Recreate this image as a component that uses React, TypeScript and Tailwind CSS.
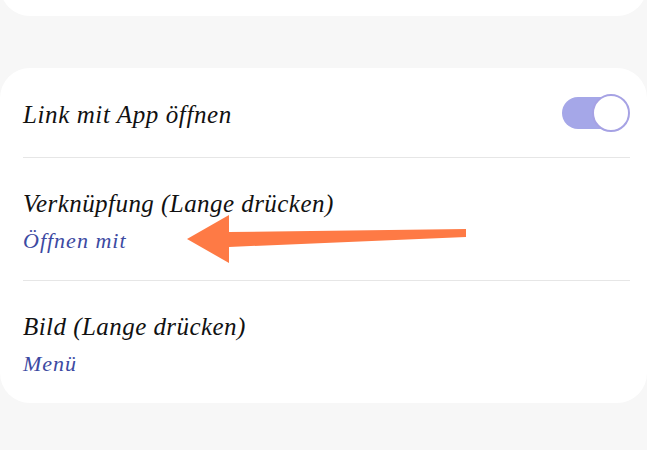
import React from "react";

const serif = { fontFamily: '"Liberation Serif", "DejaVu Serif", serif' };

function Toggle({ on }: { on: boolean }) {
  return (
    <div className="relative w-[68px] h-[38px] flex items-center">
      <div className={`h-[32px] w-[60px] rounded-full ${on ? "bg-[#a5a7e8]" : "bg-gray-300"}`} />
      <div className="absolute right-0 top-0 h-[38px] w-[38px] rounded-full bg-white border-2 border-[#a6a2e4]" />
    </div>
  );
}

function Row({ title, sub }: { title: string; sub: string }) {
  return (
    <div className="pt-[30px] pb-[25px]">
      <div className="text-[25px] leading-[32px] italic tracking-[0.45px] text-[#111]">{title}</div>
      <div className="mt-[7px] text-[22px] leading-[28px] italic tracking-[1px] text-[#3c4aa2]">{sub}</div>
    </div>
  );
}

export default function App() {
  return (
    <div className="w-[647px] h-[450px] bg-[#f7f7f7] overflow-hidden relative" style={serif}>
      <div className="-mt-[30px] h-[46px] bg-white rounded-b-[30px]" />

      <div className="mt-[52px] bg-white rounded-[30px] pl-[23px] pr-[17px]">
        <div className="h-[89px] flex items-center justify-between">
          <span className="pt-[4px] text-[25px] leading-[32px] italic tracking-[0.6px] text-[#111]">
            Link mit App öffnen
          </span>
          <Toggle on />
        </div>
        <div className="h-px bg-[#e6e6e6]" />
        <Row title="Verknüpfung (Lange drücken)" sub="Öffnen mit" />
        <div className="h-px bg-[#e6e6e6]" />
        <Row title="Bild (Lange drücken)" sub="Menü" />
      </div>

      <svg className="absolute left-0 top-0" width="647" height="450" viewBox="0 0 647 450">
        <polygon
          points="187,239 229,215 229,232 466,229 466,237 229,247 229,263"
          fill="#fe7a45"
        />
      </svg>
    </div>
  );
}
